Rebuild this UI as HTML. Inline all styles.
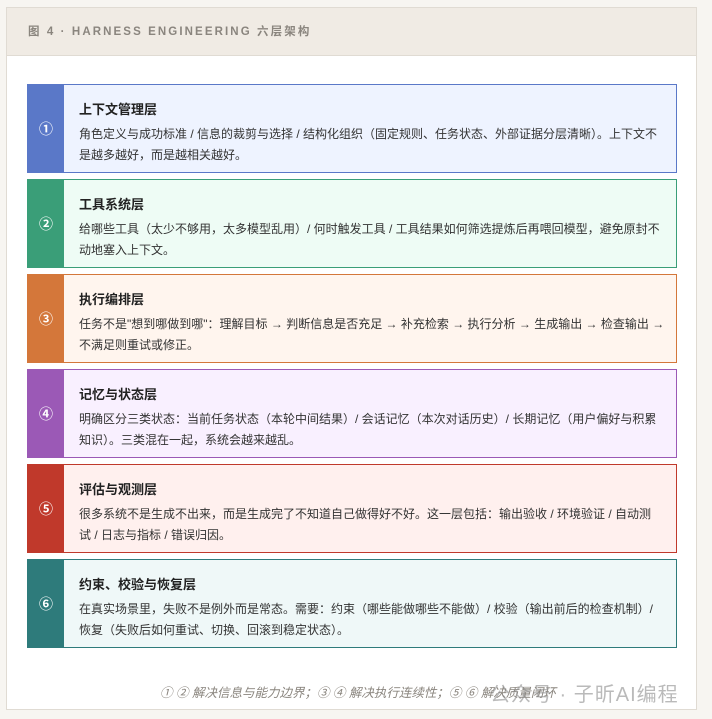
<!DOCTYPE html><html><head><meta charset="utf-8"><style>
*{margin:0;padding:0;box-sizing:border-box}
body{width:712px;height:719px;background:#f7f5f1;font-family:"Liberation Sans","Noto Sans CJK SC",sans-serif;position:relative;overflow:hidden}
.wrap{position:absolute;left:6px;top:7px;width:691px;height:703px;background:#fff;border:1px solid #e0dbd3}
.hd{height:48px;background:#f0ebe4;border-bottom:1px solid #e0dbd3;padding-left:21px;line-height:48px;font-size:11.5px;font-weight:bold;color:#8a857e;letter-spacing:2.1px}
.card{position:absolute;left:20px;width:650px;height:89px;border:1px solid;display:flex}
.num{width:36px;color:#fff;font-size:14px;font-weight:bold;display:flex;align-items:center;justify-content:center}
.ct{padding:16px 0 0 15px;width:612px}
.t{font-size:13px;font-weight:bold;color:#222;line-height:18px;margin-bottom:5px}
.d{font-size:12px;color:#333;line-height:21px;padding-right:12px}
.ft{position:absolute;left:160px;top:682px;font-size:12.5px;font-style:italic;color:#8a857e}
.wm{position:absolute;left:490px;top:678px;font-size:20px;color:rgba(140,140,140,.6);letter-spacing:1px}
</style></head><body>
<div class="wrap"><div class="hd">图 4 · HARNESS ENGINEERING 六层架构</div>
<div class="card" style="top:76px;border-color:#5a78c8;background:#eef3ff"><div class="num" style="background:#5a78c8">①</div><div class="ct"><div class="t">上下文管理层</div><div class="d">角色定义与成功标准 / 信息的裁剪与选择 / 结构化组织（固定规则、任务状态、外部证据分层清晰）。上下文不是越多越好，而是越相关越好。</div></div></div>
<div class="card" style="top:171px;border-color:#3a9e78;background:#eefcf5"><div class="num" style="background:#3a9e78">②</div><div class="ct"><div class="t">工具系统层</div><div class="d">给哪些工具（太少不够用，太多模型乱用）/ 何时触发工具 / 工具结果如何筛选提炼后再喂回模型，避免原封不动地塞入上下文。</div></div></div>
<div class="card" style="top:266px;border-color:#d4773a;background:#fff5ee"><div class="num" style="background:#d4773a">③</div><div class="ct"><div class="t">执行编排层</div><div class="d"><span style="white-space:nowrap">任务不是"想到哪做到哪"：理解目标 → 判断信息是否充足 → 补充检索 → 执行分析 → 生成输出 → 检查输出 →</span><br>不满足则重试或修正。</div></div></div>
<div class="card" style="top:361px;border-color:#9b59b6;background:#f9f0ff"><div class="num" style="background:#9b59b6">④</div><div class="ct"><div class="t">记忆与状态层</div><div class="d">明确区分三类状态：当前任务状态（本轮中间结果）/ 会话记忆（本次对话历史）/ 长期记忆（用户偏好与积累知识）。三类混在一起，系统会越来越乱。</div></div></div>
<div class="card" style="top:456px;border-color:#c0392b;background:#fff0ee"><div class="num" style="background:#c0392b">⑤</div><div class="ct"><div class="t">评估与观测层</div><div class="d">很多系统不是生成不出来，而是生成完了不知道自己做得好不好。这一层包括：输出验收 / 环境验证 / 自动测<br>试 / 日志与指标 / 错误归因。</div></div></div>
<div class="card" style="top:551px;border-color:#2e7b7b;background:#eff8f8"><div class="num" style="background:#2e7b7b">⑥</div><div class="ct"><div class="t">约束、校验与恢复层</div><div class="d">在真实场景里，失败不是例外而是常态。需要：约束（哪些能做哪些不能做）/ 校验（输出前后的检查机制）/ 恢复（失败后如何重试、切换、回滚到稳定状态）。</div></div></div>
</div>
<div class="ft">① ② 解决信息与能力边界；③ ④ 解决执行连续性；⑤ ⑥ 解决质量闭环</div>
<div class="wm">公众号 · 子昕AI编程</div>
</body></html>
